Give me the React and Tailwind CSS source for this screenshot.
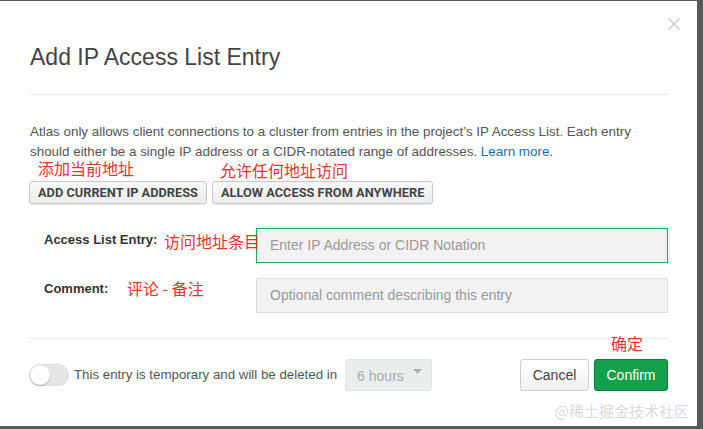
import React from 'react';

const red = 'text-[#e8312f]';
const cjk = { fontFamily: '"Noto Sans CJK SC", sans-serif' };

const Note = ({ children, className }) => (
  <span className={`absolute text-[16px] leading-[18px] font-['Noto_Sans_CJK_SC',sans-serif] ${red} ${className}`}>
    {children}
  </span>
);

const GrayButton = ({ children }) => (
  <button className="h-[23px] px-[8px] rounded-[3px] border border-[#c8c8c8] bg-gradient-to-b from-[#fafafa] to-[#ececec] text-[12.8px] font-bold font-['Roboto',sans-serif] text-[#444] shadow-[0_1px_1px_rgba(0,0,0,0.08)]">
    {children}
  </button>
);

export default function App() {
  return (
    <div className="w-[703px] h-[429px] bg-[#585858] overflow-hidden font-['Liberation_Sans',Arial,sans-serif]">
      <div className="relative mt-px w-[697px] h-[425px] bg-white px-[29px]">
        <button className="absolute right-[17px] top-[17px] text-[#cacaca]">
          <svg width="12" height="12" viewBox="0 0 12 12" fill="none" stroke="currentColor" strokeWidth="1.5">
            <path d="M0.5 0.5L11.5 11.5M11.5 0.5L0.5 11.5" />
          </svg>
        </button>

        <h1 className="pt-[40px] pb-[21px] pl-px text-[23px] leading-[32px] font-light text-[#444] border-b border-[#ececec]">
          Add IP Access List Entry
        </h1>

        <p className="mt-[27px] pl-px text-[13.4px] leading-[20px] text-[#555] w-[615px]">
          Atlas only allows client connections to a cluster from entries in the project’s IP Access List. Each entry
          should either be a single IP address or a CIDR-notated range of addresses.{' '}
          <a className="text-[#1a6fb3]">Learn more</a>.
        </p>

        <div className="relative mt-[19px] flex gap-[5px]">
          <Note className="left-[9px] -top-[22px]">添加当前地址</Note>
          <Note className="left-[191px] -top-[20px]">允许任何地址访问</Note>
          <GrayButton>ADD CURRENT IP ADDRESS</GrayButton>
          <GrayButton>ALLOW ACCESS FROM ANYWHERE</GrayButton>
        </div>

        <div className="mt-[24px] flex flex-col gap-[15px]">
          <div className="relative flex items-start">
            <label className="w-[227px] pl-[15px] pt-[4px] text-[13px] leading-[16px] font-bold text-[#333]">Access List Entry:</label>
            <Note className="left-[135px] top-[4px]">访问地址条目</Note>
            <div className="flex-1 h-[35px] border border-[#13aa52] bg-[#f2f2f2] shadow-[0_0_4px_rgba(19,170,82,0.2)] flex items-center px-[13px] text-[14px] text-[#9a9a9a]">
              Enter IP Address or CIDR Notation
            </div>
          </div>
          <div className="relative flex items-start">
            <label className="w-[227px] pl-[15px] pt-[3px] text-[13px] leading-[16px] font-bold text-[#333]">Comment:</label>
            <Note className="left-[98px] top-[1px]">评论 - 备注</Note>
            <div className="flex-1 h-[35px] border border-[#dedede] bg-[#f2f2f2] flex items-center px-[13px] text-[14px] text-[#9a9a9a]">
              Optional comment describing this entry
            </div>
          </div>
        </div>

        <div className="mt-[25px] border-t border-[#ececec]" />

        <div className="relative mt-[20px] flex items-center h-[32px]">
          <Note className="right-[25px] -top-[25px]">确定</Note>
          <div className="w-[40px] h-[22px] rounded-full bg-[#e6e6e6] border border-[#dcdcdc] relative">
            <div className="absolute left-0 top-0 w-[20px] h-[20px] rounded-full bg-white shadow-[0_1px_2px_rgba(0,0,0,0.25)]" />
          </div>
          <span className="ml-[5px] text-[13.3px] text-[#555]">This entry is temporary and will be deleted in</span>
          <div className="ml-[8px] w-[87px] h-[32px] rounded-[3px] border border-[#dfe5e4] bg-[#e9eeed] flex items-center pl-[11px] pr-[9px] justify-between text-[14px] text-[#a8adac]">
            <span className="mt-[2px]">6 hours</span>
            <svg width="9" height="5" viewBox="0 0 9 5" className="-mt-[8px]">
              <path d="M0 0H9L4.5 5Z" fill="#a9aeae" />
            </svg>
          </div>
          <div className="ml-auto flex gap-[5px]">
            <button className="w-[69px] h-[32px] rounded-[3px] border border-[#cfcfcf] bg-gradient-to-b from-white to-[#f1f1f1] text-[14px] text-[#444]">
              Cancel
            </button>
            <button className="w-[74px] h-[32px] rounded-[3px] border border-[#0d7b3a] bg-[#13a04a] text-[14px] text-white">
              Confirm
            </button>
          </div>
        </div>

        <span className="absolute right-[8px] bottom-[4px] text-[15px] text-[#dadada]" style={cjk}>
          @稀土掘金技术社区
        </span>
      </div>
    </div>
  );
}
